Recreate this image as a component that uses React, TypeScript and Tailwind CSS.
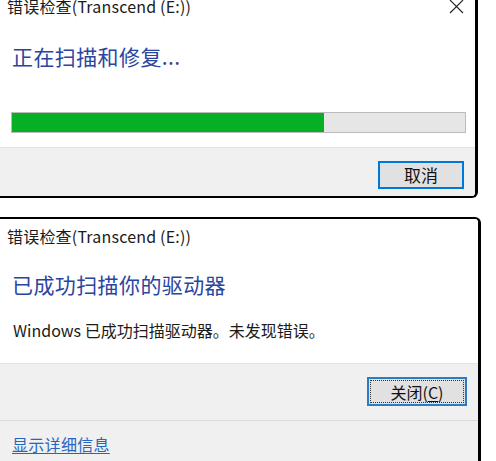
const font = { fontFamily: '"Noto Sans CJK SC", "Noto Sans", sans-serif' }

const CloseIcon = () => (
  <svg width="15" height="15" viewBox="0 0 15 15" className="absolute right-[11px] top-[-1px]">
    <path d="M1 1 L14 14 M14 1 L1 14" stroke="#222" strokeWidth="1.1" fill="none" />
  </svg>
)

const Title = () => (
  <div className="pl-[7px] text-[16px] leading-[20px] tracking-[0.2px] text-[#1b1b1b]">错误检查(Transcend (E:))</div>
)

const ScanDialog = () => (
  <div className="relative flex h-[198px] w-[478px] flex-col overflow-hidden rounded-br-[6px] border-r-[3px] border-b-2 border-black">
    <div className="flex h-[147px] flex-col bg-white">
      <div className="mt-[-4px]">
        <Title />
      </div>
      <CloseIcon />
      <div className="mt-[26px] pl-[12px] text-[21px] leading-[28px] tracking-[0.4px] text-[#2a45a0]">正在扫描和修复...</div>
      <div className="mt-[42px] ml-[11px] h-[21px] w-[455px] border border-[#bcbcbc] bg-[#e6e6e6]">
        <div className="h-full w-[312px] bg-[#06b025]" />
      </div>
    </div>
    <div className="flex flex-1 justify-end border-t border-[#e3e3e3] bg-[#f0f0f0] pt-[13px] pr-[11px]">
      <button className="h-[28px] w-[86px] border-2 border-[#0078d7] bg-[#e1e1e1] text-[17px] leading-[20px] text-[#111]">
        取消
      </button>
    </div>
  </div>
)

const DoneDialog = () => (
  <div className="mt-[19px] flex h-[244px] w-[481px] flex-col overflow-hidden rounded-tr-[6px] border-t-2 border-r-[3px] border-black">
    <div className="flex h-[144px] flex-col bg-white">
      <div className="mt-[7px]">
        <Title />
      </div>
      <div className="mt-[24px] pl-[12px] text-[21px] leading-[28px] tracking-[0.4px] text-[#2a45a0]">已成功扫描你的驱动器</div>
      <div className="mt-[22px] pl-[13px] text-[16px] leading-[20px] text-[#1b1b1b]">
        Windows 已成功扫描驱动器。未发现错误。
      </div>
    </div>
    <div className="flex h-[57px] justify-end border-t border-[#e3e3e3] bg-[#f0f0f0] pt-[13px] pr-[11px]">
      <button className="flex h-[29px] w-[100px] items-center justify-center border-2 border-[#2b7cc6] bg-[#e1e1e1] p-[1px]">
        <span className="flex h-full w-full items-center justify-center border border-dotted border-[#333] text-[16px] leading-[20px] text-[#111]">
          关闭(<span className="underline underline-offset-2">C</span>)
        </span>
      </button>
    </div>
    <div className="flex flex-1 flex-col border-t border-[#dadada] bg-[#f0f0f0]">
      <div className="mt-[13px] pl-[12px] text-[16px] leading-[20px] tracking-[0.3px] text-[#2467c0] underline underline-offset-2">
        显示详细信息
      </div>
    </div>
  </div>
)

export default function App() {
  return (
    <div className="h-[461px] w-[496px] overflow-hidden bg-white" style={font}>
      <ScanDialog />
      <DoneDialog />
    </div>
  )
}
